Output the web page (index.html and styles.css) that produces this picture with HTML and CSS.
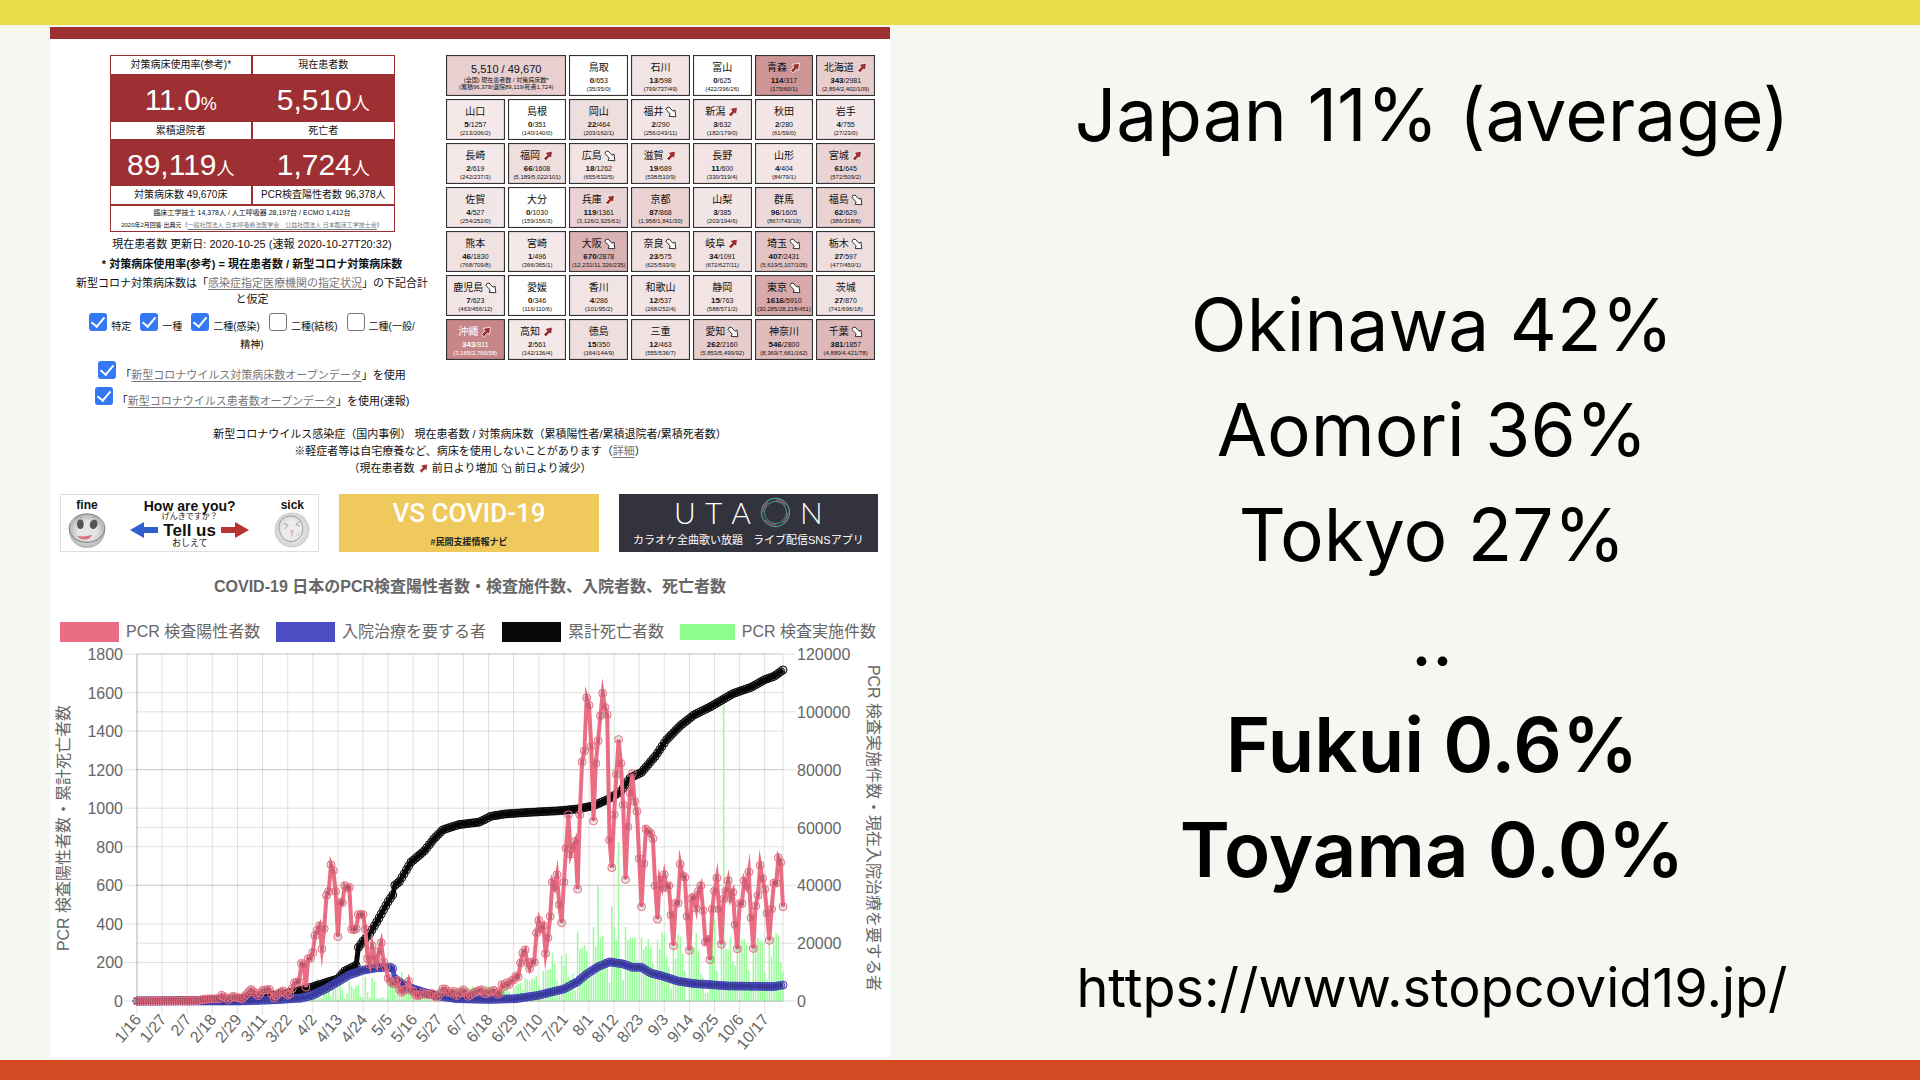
FILE: index.html
```
<!DOCTYPE html>
<html lang="ja">
<head>
<meta charset="utf-8">
<title>COVID-19 Japan</title>
<link rel="stylesheet" href="styles.css">
</head>
<body>
<svg class="defs" aria-hidden="true">
  <symbol id="up" viewBox="0 0 12 12"><path d="M1.5 8.5 5 5 3 2.5 10.5 1 9.5 8.5 7.5 7 4 10.8z" fill="#9e2f32" stroke="#fff" stroke-width=".8"/></symbol>
  <symbol id="down" viewBox="0 0 12 12"><path d="M1 3.5Q1.2 1 4 1L8 5.2 10 4 10.8 10.8 4 10.3 5.2 8z" fill="#fff" stroke="#333" stroke-width="1"/></symbol>
</svg>
<div class="slide">
  <main class="content">
    <section class="board">
      <div class="stats">
        <div class="summary">
          <table class="totals">
            <tbody>
              <tr class="h1"><th>対策病床使用率(参考)*</th><th>現在患者数</th></tr>
              <tr class="n1"><td>11.0<small>%</small></td><td>5,510<small>人</small></td></tr>
              <tr class="h2"><th>累積退院者</th><th>死亡者</th></tr>
              <tr class="n2"><td>89,119<small>人</small></td><td>1,724<small>人</small></td></tr>
              <tr class="h1"><th>対策病床数 49,670床</th><th>PCR検査陽性者数 96,378人</th></tr>
              <tr class="note"><th colspan="2"><p>臨床工学技士 14,378人 / 人工呼吸器 28,197台 / ECMO 1,412台</p><p class="src">2020年2月回答 出典元（<a href="#">一般社団法人 日本呼吸療法医学会　公益社団法人 日本臨床工学技士会</a>）</p></th></tr>
            </tbody>
          </table>
          <p class="date">現在患者数 更新日: 2020-10-25 (速報 2020-10-27T20:32)</p>
          <p class="formula">* 対策病床使用率(参考) = 現在患者数 / 新型コロナ対策病床数</p>
          <p class="assume">新型コロナ対策病床数は「<a href="#">感染症指定医療機関の指定状況</a>」の下記合計<br>と仮定</p>
          <div class="kinds">
            <label><input type="checkbox" checked>特定</label>
            <label><input type="checkbox" checked>一種</label>
            <label><input type="checkbox" checked>二種(感染)</label>
            <label><input type="checkbox">二種(結核)</label>
            <label><input type="checkbox">二種(一般/</label>
          </div>
          <p class="rest">精神)</p>
          <div class="sources">
            <label><input type="checkbox" checked><span>「<a href="#">新型コロナウイルス対策病床数オープンデータ</a>」を使用</span></label>
            <label><input type="checkbox" checked><span>「<a href="#">新型コロナウイルス患者数オープンデータ</a>」を使用(速報)</span></label>
          </div>
        </div>
        <div class="map" id="map"></div>
      </div>
      <div class="caption">
        <p>新型コロナウイルス感染症（国内事例） 現在患者数 / 対策病床数（累積陽性者/累積退院者/累積死者数）</p>
        <p>※軽症者等は自宅療養など、病床を使用しないことがあります（<a href="#">詳細</a>）</p>
        <p>（現在患者数 <svg class="arrow"><use href="#up"/></svg> 前日より増加 <svg class="arrow"><use href="#down"/></svg> 前日より減少）</p>
      </div>
      <div class="banners">
        <a class="banner tell" href="#">
          <span class="face"><b>fine</b>
            <svg viewBox="0 0 42 38"><defs><radialGradient id="g"><stop offset=".5" stop-color="#e6e6e6"/><stop offset="1" stop-color="#b4b4b4"/></radialGradient><radialGradient id="g2"><stop offset=".5" stop-color="#ececec"/><stop offset="1" stop-color="#cfcfcf"/></radialGradient></defs><ellipse cx="21" cy="20" rx="19" ry="18" fill="url(#g)"/><ellipse cx="21" cy="17" rx="19" ry="15" fill="none" stroke="#777"/><ellipse cx="14" cy="13" rx="3.5" ry="5" fill="#555"/><ellipse cx="28" cy="13" rx="4" ry="5" transform="rotate(20 28 13)" fill="#555"/><path d="M8 8q4-5 8-2M26 6q5-3 8 1" fill="none" stroke="#999"/><path d="M11 25q7 2 15-1-1 5-7 5-6 0-8-4z" fill="#d9707a"/></svg>
          </span>
          <span class="ask">
            <strong>How are you?</strong><i>げんきですか？</i>
            <span class="tellrow"><svg viewBox="0 0 28 18"><path d="M0 9 14 1v5h14v6H14v5z" fill="#2f5fcf"/></svg><em>Tell us</em><svg viewBox="0 0 28 18"><path d="M28 9 14 1v5H0v6h14v5z" fill="#bb3434"/></svg></span>
            <i class="low">おしえて</i>
          </span>
          <span class="face"><b>sick</b>
            <svg viewBox="0 0 42 38"><circle cx="21" cy="19" r="18.5" fill="url(#g2)"/><path d="M9 9q11-10 21 0 5 10 0 17-8 9-17 3-9-9-4-20z" fill="none" stroke="#999"/><path d="m12 12 5 2-4 4M30 9l-5 4 4 2" fill="none" stroke="#999"/><path d="M19 20q4-1 3 1l-2 1q3 1 0 4" fill="none" stroke="#d98a8a"/><path d="M25 26l6-6" stroke="#a9ccd8"/></svg>
          </span>
        </a>
        <a class="banner vs" href="#"><strong>VS COVID-19</strong><span>#民間支援情報ナビ</span></a>
        <a class="banner uta" href="#">
          <span class="logo"><b>U</b><b>T</b><b>A</b><svg viewBox="0 0 32 32"><circle cx="16" cy="16" r="14.5" fill="none" stroke="#4a9a9d" stroke-width="1.2"/><circle cx="16" cy="16" r="12.8" fill="none" stroke="#b85560" stroke-width="1.2" stroke-dasharray="12 8"/><circle cx="16" cy="16" r="11.4" fill="none" stroke="#4a9a9d" stroke-width="1"/></svg><b>N</b></span>
          <span class="tag"><span>カラオケ全曲歌い放題</span><span>ライブ配信SNSアプリ</span></span>
        </a>
      </div>
      <h2>COVID-19 日本のPCR検査陽性者数・検査施件数、入院者数、死亡者数</h2>
      <ul class="legend">
        <li class="pos">PCR 検査陽性者数</li><li class="care">入院治療を要する者</li><li class="dead">累計死亡者数</li><li class="tests">PCR 検査実施件数</li>
      </ul>
      <svg class="chart" id="chart" viewBox="0 0 840 410"></svg>
    </section>
    <section class="message">
      <p>Japan 11% (average)</p>
      <p class="gap">Okinawa 42%</p>
      <p>Aomori 36%</p>
      <p>Tokyo 27%</p>
      <p>..</p>
      <p class="strong">Fukui 0.6%</p>
      <p class="strong">Toyama 0.0%</p>
      <p class="url"><a href="https://www.stopcovid19.jp/">https://www.stopcovid19.jp/</a></p>
    </section>
  </main>
</div>
<script src="main.js"></script>
</body>
</html>
```
FILE: styles.css
```
* { box-sizing: border-box; }
body { margin: 0; color: #111; font-family: "Liberation Sans", "Noto Sans CJK JP", sans-serif; }
p, h2, ul { margin: 0; padding: 0; }
a { color: inherit; }
.defs { position: absolute; width: 0; height: 0; }
.slide { min-height: 100vh; display: flex; flex-direction: column; background: #f5f8f1; border-top: 25px solid #e9de4a; border-bottom: 20px solid #d24922; }
.content { flex: 1; display: grid; grid-template-columns: 84fr 103fr; padding: 2px 0 2px 50px; }

.board { background: #fff; border-top: 12px solid #9e2f32; padding-top: 16px; font-size: 11px; line-height: 16px; }
.stats { display: grid; grid-template-columns: 352fr 429fr; gap: 18px; padding: 0 15px 0 26px; }
.summary { text-align: center; }
.summary p, .summary label { white-space: nowrap; }
.summary a, .caption a { color: #777; text-underline-offset: 2px; }

.totals { width: 285px; margin: 0 auto; border-collapse: separate; border-spacing: 0; background: #9e2f32; table-layout: fixed; }
.totals th, .totals td { padding: 0; border: 1px solid #9e2f32; font-weight: 400; white-space: nowrap; }
.totals th { background: #fff; font-size: 10px; line-height: 12px; }
.totals td { padding-top: 4px; color: #fff; font-size: 30px; line-height: 34px; }
.totals small { font-size: 18px; line-height: 18px; }
.h1 { height: 20px; }
.h2 { height: 19px; }
.n1 { height: 46px; }
.n2 { height: 45px; }
.note { height: 27px; }
.totals .note p { font-size: 7px; line-height: 12px; }
.totals .note .src { font-size: 6px; }

.date { margin-top: 4px; }
.formula { margin-top: 4px; font-weight: 700; }
.assume { margin-top: 3px; }
.kinds { display: flex; justify-content: center; gap: 9px; margin-top: 6px; }
.kinds label { display: flex; gap: 4px; line-height: 28px; height: 28px; font-size: 10px; }
.rest { margin-top: -4px; font-size: 10px; }
input { appearance: none; flex: none; width: 18px; height: 18px; margin: 0; border: 1px solid #777; border-radius: 3px; background: #fff; }
input:checked { border: 0; background: #3478f6; display: grid; place-items: center; }
input:checked::after { content: ""; width: 6px; height: 11px; margin-bottom: 3px; border: solid #fff; border-width: 0 2px 2px 0; transform: rotate(40deg); }
.sources { margin-top: 8px; }
.sources label { display: flex; justify-content: center; gap: 4px; height: 26px; line-height: 28px; }

.map { display: grid; grid-template-columns: repeat(7, minmax(0, 1fr)); grid-auto-rows: 41px; gap: 3px; align-content: start; }
.pref { border: 1px solid #333; padding-top: 4px; text-align: center; white-space: nowrap; overflow: hidden; font-size: 7px; line-height: 11px; box-shadow: inset 0 0 1px #333; }
.pref h3 { display: flex; justify-content: center; align-items: center; gap: 2px; margin: 0; font-size: 10px; line-height: 15px; font-weight: 400; }
.pref svg { width: 12px; height: 12px; }
.pref p b { font-size: 8px; }
.pref .sub { font-size: 6px; line-height: 6px; }
.pref.hot { color: #fff; }
.pref.total { grid-column: span 2; padding-top: 5px; }
.pref.total h3 { font-size: 11px; line-height: 16px; }
.pref.total .sub { line-height: 7px; }

.caption { margin-top: 13px; text-align: center; line-height: 16px; }
.caption p { height: 17px; }
.arrow { width: 11px; height: 11px; vertical-align: -2px; }

.banners { display: grid; grid-template-columns: repeat(3, 1fr); gap: 20px; margin-top: 17px; padding: 0 12px 0 10px; }
.banner { height: 58px; display: flex; text-decoration: none; overflow: hidden; }
.tell { border: 1px solid #ddd; justify-content: space-between; padding: 3px 5px; color: #111; }
.face { display: flex; flex-direction: column; align-items: center; font-size: 12px; line-height: 14px; }
.face svg { width: 42px; height: 38px; }
.ask { display: flex; flex-direction: column; align-items: center; padding-top: 1px; }
.ask strong { font-size: 14px; line-height: 14px; }
.ask i { font-style: normal; font-size: 8px; line-height: 8px; }
.ask .low { font-size: 9px; line-height: 9px; }
.ask em { font-style: normal; font-weight: 700; font-size: 17px; line-height: 17px; }
.tellrow { display: flex; align-items: center; gap: 5px; }
.tellrow svg { width: 28px; height: 18px; }
.vs { flex-direction: column; align-items: center; background: #efc95b; color: #fff; padding-top: 5px; }
.vs strong { font: 500 26px/28px "Liberation Sans Narrow", Roboto, sans-serif; }
.vs span { margin-top: 7px; color: #222; font-size: 9px; font-weight: 700; }
.uta { flex-direction: column; align-items: center; background: #33333d; color: #fff; padding-top: 3px; }
.logo { display: flex; align-items: center; gap: 9px; height: 31px; }
.logo b { font: 300 30px/31px Lato, sans-serif; }
.logo svg { width: 31px; height: 31px; }
.tag { display: flex; gap: 10px; font-size: 11px; line-height: 18px; margin-top: 3px; white-space: nowrap; }

h2 { margin-top: 25px; text-align: center; color: #666; font-size: 16px; line-height: 20px; }
.legend { display: flex; justify-content: space-between; margin-top: 24px; padding: 0 14px 0 10px; list-style: none; color: #666; font-size: 16px; line-height: 22px; white-space: nowrap; }
.legend li { display: flex; align-items: center; gap: 7px; }
.legend li::before { content: ""; width: 59px; height: 20px; background: #eb6d83; }
.legend .care::before { background: #4d4dc4; }
.legend .dead::before { background: #08080a; }
.legend .tests::before { width: 55px; height: 16px; background: #90fd90; }
.chart { display: block; width: 100%; height: auto; margin-top: 2px; }
.chart text { fill: #666; font-size: 16px; }

.message { padding: 35px 0 0 54px; text-align: center; color: #000; font-family: Inter, "Liberation Sans", sans-serif; font-size: 73px; line-height: 105px; white-space: nowrap; }
.gap { margin-top: 105px; }
.strong { font-weight: 600; font-size: 76px; }
.url { margin-top: 48px; font-size: 54px; line-height: 75px; }
.url a { text-decoration: none; }
```
FILE: main.js
```
// Prefectures in map order: name, patients, beds, cumulative detail, trend
const prefs = `鳥取,0,653,35/35/0
石川,13,598,799/737/49
富山,0,625,422/396/26
青森,114,317,175/60/1,up
北海道,343,2981,2;854/2;402/109,up
山口,5,1257,213/206/2
島根,0,351,140/140/0
岡山,22,464,203/162/1
福井,2,290,256/243/11,down
新潟,3,632,182/179/0,up
秋田,2,280,61/59/0
岩手,4,755,27/23/0
長崎,2,619,242/237/3
福岡,66,1608,5;189/5;022/101,up
広島,18,1262,655/632/5,down
滋賀,19,689,538/510/9,up
長野,11,600,330/319/4
山形,4,404,84/79/1
宮城,61,645,572/509/2,up
佐賀,4,527,254/252/0
大分,0,1030,159/156/3
兵庫,119,1361,3;126/2;925/61,up
京都,87,868,1;958/1;841/30
山梨,3,385,203/194/6
群馬,96,1605,867/743/19
福島,62,629,386/318/6,down
熊本,46,1830,768/709/8
宮崎,1,496,366/365/1
大阪,670,2878,12;231/11;326/235,down
奈良,23,575,625/593/9,down
岐阜,34,1091,672/627/11,up
埼玉,407,2431,5;619/5;107/105,down
栃木,27,597,477/450/1,down
鹿児島,7,623,463/456/12,down
愛媛,0,346,116/110/6
香川,4,286,101/95/2
和歌山,12,537,268/252/4
静岡,15,763,588/571/2
東京,1616,5910,30;285/28;218/451,down
茨城,27,870,741/696/18
沖縄,343,811,3;165/2;766/58,up
高知,2,561,142/136/4,up
徳島,15,350,164/144/9
三重,12,463,555/536/7
愛知,262,2160,5;853/5;499/92,down
神奈川,546,2800,8;369/7;661/162
千葉,381,1857,4;880/4;421/78,down`.split('\n').map(l => l.split(','));

const tint = r => r ? `rgba(158,47,50,${(0.11 + r * 1.1).toFixed(2)})` : '#fff';
document.getElementById('map').innerHTML =
  `<div class="pref total" style="background:${tint(0.11)}"><h3>5,510 / 49,670</h3><p class="sub">(全国) 現在患者数 / 対策病床数*</p><p class="sub">(累積96,378/退院89,119/死者1,724)</p></div>` +
  prefs.map(([name, n, beds, sub, trend]) =>
    `<div class="pref${n / beds > 0.4 ? ' hot' : ''}" style="background:${tint(n / beds)}"><h3>${name}${trend ? `<svg><use href="#${trend}"/></svg>` : ''}</h3><p><b>${n}</b>/${beds}</p><p class="sub">(${sub.replace(/;/g, ',')})</p></div>`
  ).join('');

// Chart
const X0 = 87, X1 = 733, Y0 = 356, Y1 = 9, DAYS = 283;
const px = d => +(X0 + d * (X1 - X0) / DAYS).toFixed(1);
const py = v => +(Y0 - v * (Y0 - Y1) / 1800).toFixed(1);
const interp = keys => {
  const out = [];
  for (let d = 0, k = 0; d <= DAYS; d++) {
    while (k < keys.length - 2 && d > keys[k + 1][0]) k++;
    const [a, va] = keys[k], [b, vb] = keys[k + 1];
    out.push(va + (vb - va) * (d - a) / (b - a));
  }
  return out;
};
const early = interp([[0,0],[26,1],[30,10],[36,12],[37,30],[40,8],[42,24],[46,12],[48,35],[50,60],[53,28],[55,55],[58,60],[60,15],[62,40],[64,52],[66,30],[67,38],[68,65],[69,95],[71,100],[283,100]]).slice(0, 72);
const positive = early.concat([
  195,190,72,220,222,252,339,366,390,270,375,548,569,707,676,569,334,512,510,598,586,590,373,370,375,448,448,448,373,220,190,287,220,190,258,302,204,176,119,102,90,88,107,60,45,55,62,102,55,50,30,28,30,42,35,35,32,40,35,20,25,42,62,62,45,48,40,50,28,45,42,58,45,25,30,40,45,50,55,58,
  40,38,50,45,55,52,35,40,85,75,95,85,105,110,130,125,197,249,265,200,168,202,202,353,418,373,390,247,328,439,617,590,655,500,406,617,792,966,762,799,828,581,966,1241,1297,1573,1534,1321,934,1233,1350,1480,1596,1523,1485,835,692,966,1176,1356,1233,1017,631,903,1079,1179,1036,984,738,489,712,892,880,871,842,598,425,629,588,655,588,598,446,287,508,508,709,650,641,439,263,532,541,482,569,598,469,306,320,214,477,570,638,477,294,529,570,624,534,564,396,271,505,505,624,595,669,432,273,493,548,704,636,579,455,315,477,612,612,743,718,489]);
const deaths = interp([[0,0],[40,3],[60,28],[72,55],[80,85],[88,115],[91,155],[96,185],[97,278],[99,310],[102,350],[106,430],[110,515],[112,550],[113,600],[115,620],[120,720],[124,760],[126,780],[130,840],[134,888],[141,915],[150,928],[155,958],[161,970],[171,978],[185,987],[193,996],[200,1013],[206,1044],[212,1088],[216,1157],[221,1186],[227,1269],[232,1356],[238,1428],[244,1484],[251,1525],[261,1594],[269,1627],[275,1667],[279,1684],[283,1717]]);
const inCare = interp([[0,0],[45,0],[60,6],[72,15],[77,30],[83,65],[88,100],[93,135],[99,160],[105,172],[111,175],[112,168],[113,115],[118,75],[123,55],[130,30],[140,12],[154,8],[166,12],[176,30],[181,45],[187,62],[193,100],[197,140],[202,178],[207,203],[213,192],[217,175],[221,175],[225,145],[230,130],[237,103],[244,90],[251,85],[259,78],[279,75],[283,83]]);
// Daily test counts up to the last day, on the left scale
const tests = [10,12,60,15,115,20,18,45,100,60,20,130,90,10,95,60,12,42,100,80,62,78,80,20,18,125,45,18,120,100,10,14,17,20,10,115,100,75,70,75,30,150,90,45,40,70,85,60,30,20,50,45,55,60,50,20,25,60,65,50,55,40,25,70,60,65,70,75,80,35,70,65,75,60,60,30,25,75,80,75,70,65,30,60,80,75,70,85,50,30,70,80,90,95,60,120,110,105,115,115,130,80,45,155,160,165,165,250,193,105,70,237,180,245,125,110,142,55,360,270,275,292,260,130,135,385,280,595,328,338,215,200,95,492,385,313,825,205,110,385,315,327,327,327,210,165,328,270,286,322,277,195,160,320,270,358,345,230,178,65,280,218,345,333,245,155,5,310,290,280,350,262,140,120,40,45,270,300,428,155,100,290,1535,270,262,328,205,185,290,310,320,320,292,160,100,290,305,330,310,310,145,110,310,230,335,352,342,200,150];
const firstTest = DAYS + 1 - tests.length;

let s = '';
const grid = (x1, y1, x2, y2, o = 0.12) => { s += `<path d="M${x1} ${y1}L${x2} ${y2}" stroke="#000" stroke-opacity="${o}"/>`; };
for (let v = 0; v <= 1800; v += 200) {
  grid(X0 - 13, py(v), X1, py(v));
  s += `<text x="73" y="${py(v) + 6}" text-anchor="end">${v}</text>`;
}
for (let v = 0; v <= 1800; v += 300) {
  grid(X0, py(v), X1 + 13, py(v));
  s += `<text x="747" y="${py(v) + 6}">${v / 3 * 200}</text>`;
}
'1/16 1/27 2/7 2/18 2/29 3/11 3/22 4/2 4/13 4/24 5/5 5/16 5/27 6/7 6/18 6/29 7/10 7/21 8/1 8/12 8/23 9/3 9/14 9/25 10/6 10/17'.split(' ').forEach((t, i) => {
  const x = px(i * 11);
  grid(x, Y1, x, Y0 + 13);
  s += `<text text-anchor="end" transform="translate(${x + 5} ${Y0 + 19}) rotate(-50)">${t}</text>`;
});
grid(X0, Y1, X0, Y0, 0.2);
grid(X1, Y1, X1, Y0);
grid(X0, Y0, X1, Y0, 0.2);
s += `<text text-anchor="middle" transform="translate(19 183) rotate(-90)">PCR 検査陽性者数・累計死亡者数</text>`;
s += `<text text-anchor="middle" transform="translate(818 183) rotate(90)">PCR 検査実施件数・現在入院治療を要する者</text>`;
s += `<path stroke="#98fd98" stroke-width="1.5" d="${tests.map((v, i) => `M${px(firstTest + i)} ${Y0}V${py(v)}`).join('')}"/>`;
const line = (vals, color, w, dot, r) => {
  s += `<polyline fill="none" stroke="${color}" stroke-width="${w}" stroke-miterlimit="10" points="${vals.map((v, d) => px(d) + ',' + py(v)).join(' ')}"/>`;
  s += vals.map((v, d) => `<circle cx="${px(d)}" cy="${py(v)}" r="${r}" fill="rgba(0,0,0,.1)" stroke="${dot}"/>`).join('');
};
line(deaths, '#08080a', 5, '#08080a', 4);
line(inCare, '#4d4dc4', 5, '#4545bd', 4);
line(positive, '#eb6d83', 4, '#eb6d83', 4);
document.getElementById('chart').innerHTML = s;
```
